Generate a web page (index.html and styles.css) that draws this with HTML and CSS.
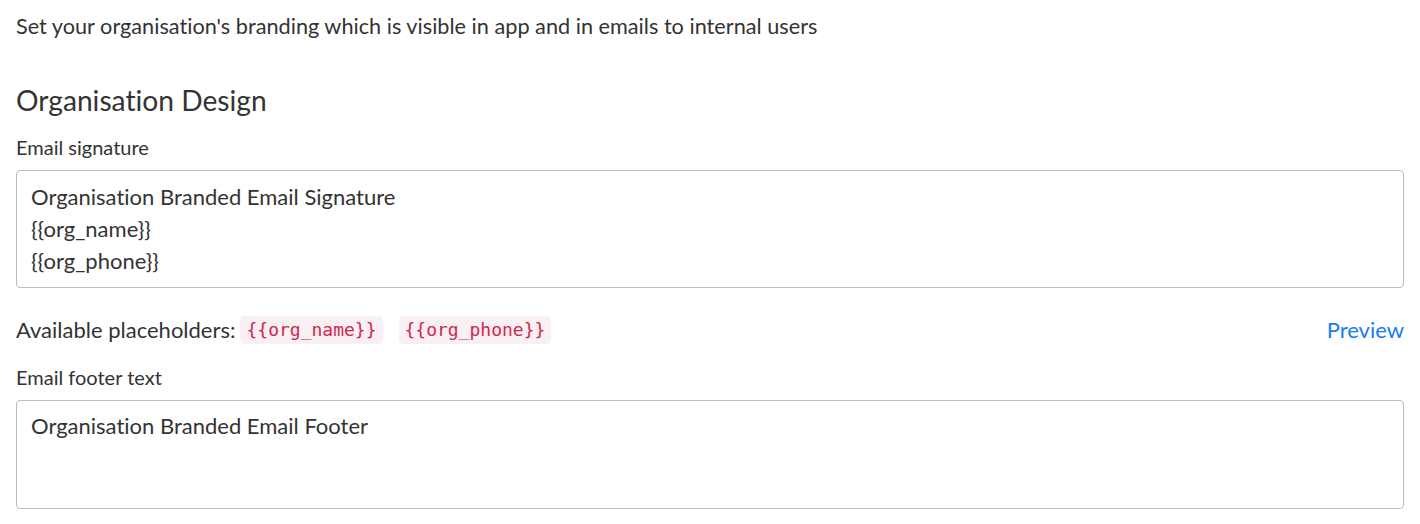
FILE: index.html
```html
<!DOCTYPE html>
<html>
<head>
<meta charset="utf-8">
<link rel="stylesheet" href="styles.css">
</head>
<body>
<div class="page">
  <p class="intro">Set your organisation's branding which is visible in app and in emails to internal users</p>
  <h2 class="title">Organisation Design</h2>
  <div class="field">
    <label class="label">Email signature</label>
    <div class="box sig">Organisation Branded Email Signature<br>{{org_name}}<br>{{org_phone}}</div>
  </div>
  <div class="placeholders">
    <div class="ph-left">
      <span>Available placeholders:</span>
      <code class="chip">{{org_name}}</code>
      <code class="chip">{{org_phone}}</code>
    </div>
    <a class="preview" href="#">Preview</a>
  </div>
  <div class="field">
    <label class="label footer-label">Email footer text</label>
    <div class="box footer">Organisation Branded Email Footer</div>
  </div>
</div>
</body>
</html>
```
FILE: styles.css
```css
html, body {
  margin: 0;
  padding: 0;
  background: #fff;
}
body {
  font-family: Lato, "Open Sans", sans-serif;
  color: #333;
  font-variant-ligatures: none;
}
.page {
  padding: 11px 16px 0 16px;
}
.intro {
  margin: 0;
  font-size: 21.7px;
  line-height: 30px;
}
.title {
  margin: 42px 0 0 0;
  font-size: 28.2px;
  font-weight: 400;
  line-height: 34px;
}
.field {
  display: flex;
  flex-direction: column;
}
.label {
  margin-top: 17px;
  font-size: 20px;
  line-height: 27px;
  margin-bottom: 9px;
}
.footer-label {
  margin-top: 19px;
}
.box {
  border: 1px solid #bdbdbd;
  border-radius: 4px;
  padding: 10px 14px;
  font-size: 22px;
  line-height: 32px;
  box-sizing: border-box;
}
.sig {
  height: 118px;
}
.footer {
  height: 109px;
  padding-top: 9px;
}
.placeholders {
  margin-top: 27px;
  display: flex;
  justify-content: space-between;
  align-items: center;
  font-size: 22px;
  line-height: 30px;
}
.ph-left {
  display: flex;
  align-items: center;
}
.chip {
  font-family: "DejaVu Sans Mono", "Liberation Mono", monospace;
  font-size: 18px;
  color: #d0274f;
  background: #f9f0f3;
  border-radius: 5px;
  padding: 0 6px;
  line-height: 28px;
  margin-left: 5px;
}
.chip + .chip {
  margin-left: 16px;
}
.preview {
  color: #1a7cf5;
  text-decoration: none;
}
```
